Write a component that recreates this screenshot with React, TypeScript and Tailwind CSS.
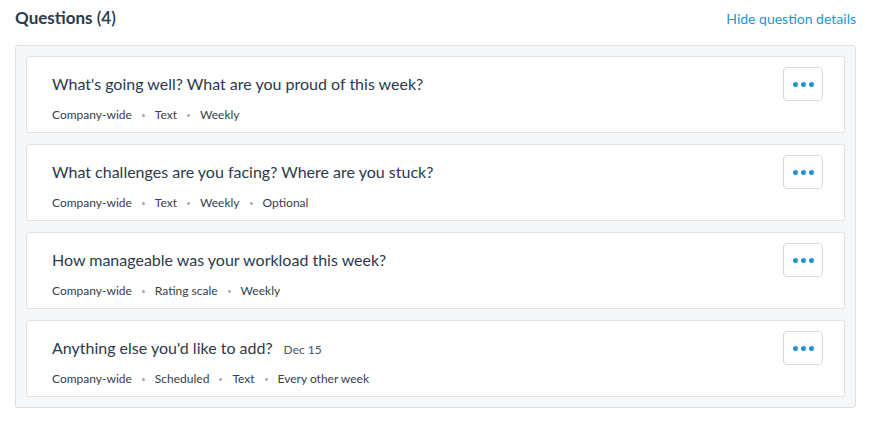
import { Fragment } from "react";

type Question = {
  title: string;
  date?: string;
  tags: string[];
};

const QUESTIONS: Question[] = [
  {
    title: "What's going well? What are you proud of this week?",
    tags: ["Company-wide", "Text", "Weekly"],
  },
  {
    title: "What challenges are you facing? Where are you stuck?",
    tags: ["Company-wide", "Text", "Weekly", "Optional"],
  },
  {
    title: "How manageable was your workload this week?",
    tags: ["Company-wide", "Rating scale", "Weekly"],
  },
  {
    title: "Anything else you'd like to add?",
    date: "Dec 15",
    tags: ["Company-wide", "Scheduled", "Text", "Every other week"],
  },
];

function MoreButton() {
  return (
    <button
      type="button"
      className="flex h-[34px] w-[40px] shrink-0 items-center justify-center gap-[3px] rounded-[4px] border border-[#d5d9de] bg-white"
      aria-label="More options"
    >
      <span className="h-[5px] w-[5px] rounded-full bg-[#1b96d4]" />
      <span className="h-[5px] w-[5px] rounded-full bg-[#1b96d4]" />
      <span className="h-[5px] w-[5px] rounded-full bg-[#1b96d4]" />
    </button>
  );
}

function QuestionCard({ question }: { question: Question }) {
  return (
    <div className="flex items-start justify-between rounded-[3px] border border-[#dfe2e6] bg-white pl-[25px] pr-[21px]">
      <div className="pt-4 pb-[9px]">
        <div className="flex items-baseline gap-[11px]">
          <h3 className="text-[16px] leading-[22px] text-[#2b3a4c]">{question.title}</h3>
          {question.date && (
            <span className="text-[12px] text-[#4a5564]">{question.date}</span>
          )}
        </div>
        <div className="mt-3 flex items-center text-[12px] leading-4 text-[#36404e]">
          {question.tags.map((tag, i) => (
            <Fragment key={tag}>
              {i > 0 && (
                <span className="mx-[10px] h-[3px] w-[3px] rounded-full bg-[#a3a9b1]" />
              )}
              <span>{tag}</span>
            </Fragment>
          ))}
        </div>
      </div>
      <div className="pt-[10px]">
        <MoreButton />
      </div>
    </div>
  );
}

export default function App() {
  return (
    <div
      className="min-h-[423px] bg-white pt-[6px]"
      style={{ fontFamily: "Lato, 'Open Sans', sans-serif" }}
    >
      <div className="ml-[15px] w-[841px]">
        <div className="flex items-center justify-between">
          <h2 className="text-[17px] leading-6 font-bold text-[#2b3a4c]">
            Questions <span className="font-semibold">(4)</span>
          </h2>
          <a href="#" className="text-[14px] text-[#1b96d4]">
            Hide question details
          </a>
        </div>
        <div className="mt-[15px] flex flex-col gap-[11px] rounded-[3px] border border-[#dcdfe3] bg-[#f6f7f9] p-[10px]">
          {QUESTIONS.map((q) => (
            <QuestionCard key={q.title} question={q} />
          ))}
        </div>
      </div>
    </div>
  );
}
